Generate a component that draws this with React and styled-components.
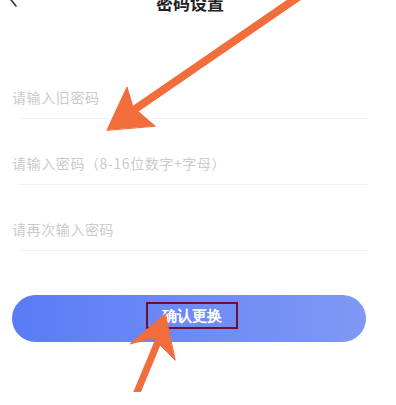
import React from 'react'
import styled, { createGlobalStyle } from 'styled-components'

const GlobalStyle = createGlobalStyle`
  html, body {
    margin: 0;
    padding: 0;
    background: #ffffff;
    overflow: hidden;
  }
  body {
    font-family: "Noto Sans CJK SC", "Noto Sans", sans-serif;
  }
`

const fields = [
  '请输入旧密码',
  '请输入密码（8-16位数字+字母）',
  '请再次输入密码',
]

const App = () => {
  return (
    <Page>
      <GlobalStyle />
      <Header>
        <Back>
          <svg width="10" height="18" viewBox="0 0 10 18">
            <path d="M8 1 L1.5 9 L8 17" fill="none" stroke="#333" strokeWidth="1.6" strokeLinecap="round" />
          </svg>
        </Back>
        <Title>密码设置</Title>
      </Header>
      <Form>
        {fields.map((f) => (
          <Field key={f}>
            <Input placeholder={f} type="password" />
            <Divider />
          </Field>
        ))}
      </Form>
      <Submit>
        <Marked>确认更换</Marked>
      </Submit>
      <Annotations width="396" height="405" viewBox="0 0 396 405">
        <g fill="#f26d3c" stroke="#f26d3c" strokeLinecap="round" strokeLinejoin="round">
          <line x1="304" y1="6" x2="128" y2="127" strokeWidth="8" />
          <polygon points="107,143 127,100 133,120 155,139" strokeWidth="1" />
          <line x1="135" y1="410" x2="160" y2="350" strokeWidth="7" />
          <polygon points="165,327 130,357 153,351 175,373" strokeWidth="1" />
        </g>
      </Annotations>
    </Page>
  )
}

export default App

const Page = styled.div`
  position: relative;
  width: 396px;
  height: 405px;
  background: #fff;
`

const Header = styled.div`
  position: relative;
  margin-top: -13px;
  height: 30px;
  display: flex;
  align-items: center;
  justify-content: center;
`

const Back = styled.div`
  position: absolute;
  left: 8px;
  top: 2px;
  display: flex;
`

const Title = styled.div`
  font-size: 17px;
  font-weight: 700;
  color: #222;
  margin-left: -16px;
`

const Form = styled.div`
  display: flex;
  flex-direction: column;
  margin-top: 36px;
`

const Field = styled.div`
  height: 66px;
  display: flex;
  flex-direction: column;
  justify-content: flex-end;
`

const Input = styled.input`
  border: none;
  outline: none;
  background: transparent;
  padding: 0 0 0 12px;
  height: 20px;
  margin-bottom: 11px;
  font-family: inherit;
  font-size: 14px;
  letter-spacing: 0.6px;
  color: #333;

  &::placeholder {
    color: #cbcbcb;
  }
`

const Divider = styled.div`
  height: 1px;
  background: #f1f1f1;
  margin: 0 28px 0 18px;
`

const Submit = styled.button`
  margin: 44px 0 0 12px;
  width: 354px;
  height: 47px;
  border: none;
  border-radius: 24px;
  background: linear-gradient(90deg, #5a7bf6 0%, #6d8bf6 50%, #7f98f4 100%);
  display: flex;
  align-items: center;
  justify-content: center;
  padding: 0;
  cursor: pointer;
`

const Marked = styled.span`
  box-sizing: border-box;
  width: 92px;
  height: 27px;
  border: 2px solid #6a0f35;
  display: flex;
  align-items: flex-end;
  justify-content: center;
  padding-bottom: 1px;
  margin-left: 6px;
  margin-top: -6px;
  color: #fff;
  font-family: inherit;
  font-size: 15px;
  font-weight: 700;
`

const Annotations = styled.svg`
  position: absolute;
  left: 0;
  top: 0;
  pointer-events: none;
`
